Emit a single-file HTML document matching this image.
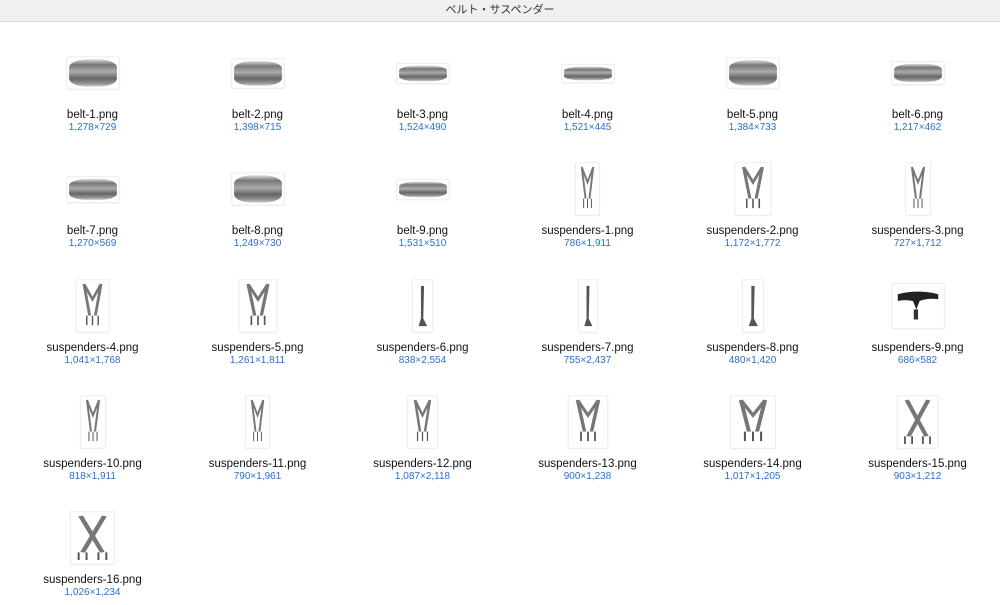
<!DOCTYPE html>
<html><head><meta charset="utf-8"><style>
*{margin:0;padding:0;box-sizing:border-box}
body{width:1000px;height:600px;background:#fff;font-family:"Liberation Sans","Noto Sans CJK JP",sans-serif;overflow:hidden;position:relative}
.tb{position:absolute;left:0;top:0;width:1000px;height:22px;background:#f0f0f0;border-bottom:1px solid #dcdcdc;text-align:center;font-size:11px;line-height:21px;color:#333}
.it{position:absolute;width:165px;height:100px}
.th{position:absolute;left:0;top:0;width:165px;height:66px;display:flex;align-items:center;justify-content:center}
.fr{background:#fff;padding:2px;box-shadow:0 0 0 1px #ececec,0 1px 2px rgba(0,0,0,.12);transform:scale(.92)}
.b{background:linear-gradient(180deg,#ddd 0%,#777 20%,#aaa 45%,#666 70%,#999 90%,#ddd 100%);border-radius:40%/30%}
.s{background:#fff}
.s svg{display:block;width:100%;height:100%}
.n{position:absolute;top:68px;left:0;width:165px;text-align:center;font-size:11.5px;color:#111;line-height:14px}
.d{position:absolute;top:82px;left:0;width:165px;text-align:center;font-size:10px;color:#2a6fd0;line-height:12px}
</style></head><body>
<div class="tb">ベルト・サスペンダー</div>
<svg width="0" height="0" style="position:absolute"><defs>
<symbol id="sp" viewBox="0 0 20 50" preserveAspectRatio="none"><path d="M4 2 L8 35 M16 2 L12 35 M4 2 L10 18 L16 2" stroke="#777" stroke-width="2" fill="none"/><path d="M6 35 v10 M10 35 v10 M14 35 v10" stroke="#555" stroke-width="1"/></symbol>
<symbol id="sx" viewBox="0 0 20 50" preserveAspectRatio="none"><path d="M4 2 L15 40 M16 2 L5 40" stroke="#777" stroke-width="2.5" fill="none"/><path d="M3 40 v8 M7 40 v8 M13 40 v8 M17 40 v8" stroke="#555" stroke-width="1"/></symbol>
<symbol id="lg" viewBox="0 0 20 50" preserveAspectRatio="none"><path d="M8 4 L12 4 L11 38 L16 46 L5 46 L8 38Z" fill="#555"/></symbol>
</defs></svg>

<div class="it" style="left:10px;top:40px"><div class="th"><div class="fr"><div class="b" style="width:52px;height:30px"></div></div></div><div class="n">belt-1.png</div><div class="d">1,278×729</div></div>
<div class="it" style="left:175px;top:40px"><div class="th"><div class="fr"><div class="b" style="width:52px;height:27px"></div></div></div><div class="n">belt-2.png</div><div class="d">1,398×715</div></div>
<div class="it" style="left:340px;top:40px"><div class="th"><div class="fr"><div class="b" style="width:52px;height:17px"></div></div></div><div class="n">belt-3.png</div><div class="d">1,524×490</div></div>
<div class="it" style="left:505px;top:40px"><div class="th"><div class="fr"><div class="b" style="width:52px;height:15px"></div></div></div><div class="n">belt-4.png</div><div class="d">1,521×445</div></div>
<div class="it" style="left:670px;top:40px"><div class="th"><div class="fr"><div class="b" style="width:52px;height:28px"></div></div></div><div class="n">belt-5.png</div><div class="d">1,384×733</div></div>
<div class="it" style="left:835px;top:40px"><div class="th"><div class="fr"><div class="b" style="width:52px;height:20px"></div></div></div><div class="n">belt-6.png</div><div class="d">1,217×462</div></div>

<div class="it" style="left:10px;top:156px"><div class="th"><div class="fr"><div class="b" style="width:52px;height:23px"></div></div></div><div class="n">belt-7.png</div><div class="d">1,270×569</div></div>
<div class="it" style="left:175px;top:156px"><div class="th"><div class="fr"><div class="b" style="width:52px;height:30px"></div></div></div><div class="n">belt-8.png</div><div class="d">1,249×730</div></div>
<div class="it" style="left:340px;top:156px"><div class="th"><div class="fr"><div class="b" style="width:52px;height:17px"></div></div></div><div class="n">belt-9.png</div><div class="d">1,531×510</div></div>
<div class="it" style="left:505px;top:156px"><div class="th"><div class="fr s" style="width:25px;height:56px"><svg><use href="#sp"/></svg></div></div><div class="n">suspenders-1.png</div><div class="d">786×1,911</div></div>
<div class="it" style="left:670px;top:156px"><div class="th"><div class="fr s" style="width:38px;height:56px"><svg><use href="#sp"/></svg></div></div><div class="n">suspenders-2.png</div><div class="d">1,172×1,772</div></div>
<div class="it" style="left:835px;top:156px"><div class="th"><div class="fr s" style="width:26px;height:56px"><svg><use href="#sp"/></svg></div></div><div class="n">suspenders-3.png</div><div class="d">727×1,712</div></div>

<div class="it" style="left:10px;top:273px"><div class="th"><div class="fr s" style="width:35px;height:56px"><svg><use href="#sp"/></svg></div></div><div class="n">suspenders-4.png</div><div class="d">1,041×1,768</div></div>
<div class="it" style="left:175px;top:273px"><div class="th"><div class="fr s" style="width:40px;height:56px"><svg><use href="#sp"/></svg></div></div><div class="n">suspenders-5.png</div><div class="d">1,261×1,811</div></div>
<div class="it" style="left:340px;top:273px"><div class="th"><div class="fr s" style="width:21px;height:56px"><svg><use href="#lg"/></svg></div></div><div class="n">suspenders-6.png</div><div class="d">838×2,554</div></div>
<div class="it" style="left:505px;top:273px"><div class="th"><div class="fr s" style="width:20px;height:56px"><svg><use href="#lg"/></svg></div></div><div class="n">suspenders-7.png</div><div class="d">755×2,437</div></div>
<div class="it" style="left:670px;top:273px"><div class="th"><div class="fr s" style="width:22px;height:56px"><svg><use href="#lg"/></svg></div></div><div class="n">suspenders-8.png</div><div class="d">480×1,420</div></div>
<div class="it" style="left:835px;top:273px"><div class="th"><div class="fr s" style="width:56px;height:48px"><svg viewBox="0 0 56 48"><path d="M4 10 Q28 4 52 10 L52 16 Q40 14 30 18 L26 28 L22 18 Q12 16 4 18Z" fill="#222"/><rect x="23" y="28" width="5" height="12" fill="#333"/></svg></div></div><div class="n">suspenders-9.png</div><div class="d">686×582</div></div>

<div class="it" style="left:10px;top:389px"><div class="th"><div class="fr s" style="width:26px;height:56px"><svg><use href="#sp"/></svg></div></div><div class="n">suspenders-10.png</div><div class="d">818×1,911</div></div>
<div class="it" style="left:175px;top:389px"><div class="th"><div class="fr s" style="width:25px;height:56px"><svg><use href="#sp"/></svg></div></div><div class="n">suspenders-11.png</div><div class="d">790×1,961</div></div>
<div class="it" style="left:340px;top:389px"><div class="th"><div class="fr s" style="width:31px;height:56px"><svg><use href="#sp"/></svg></div></div><div class="n">suspenders-12.png</div><div class="d">1,087×2,118</div></div>
<div class="it" style="left:505px;top:389px"><div class="th"><div class="fr s" style="width:42px;height:56px"><svg><use href="#sp"/></svg></div></div><div class="n">suspenders-13.png</div><div class="d">900×1,238</div></div>
<div class="it" style="left:670px;top:389px"><div class="th"><div class="fr s" style="width:48px;height:56px"><svg><use href="#sp"/></svg></div></div><div class="n">suspenders-14.png</div><div class="d">1,017×1,205</div></div>
<div class="it" style="left:835px;top:389px"><div class="th"><div class="fr s" style="width:43px;height:56px"><svg><use href="#sx"/></svg></div></div><div class="n">suspenders-15.png</div><div class="d">903×1,212</div></div>

<div class="it" style="left:10px;top:505px"><div class="th"><div class="fr s" style="width:47px;height:56px"><svg><use href="#sx"/></svg></div></div><div class="n">suspenders-16.png</div><div class="d">1,026×1,234</div></div>
</body></html>
